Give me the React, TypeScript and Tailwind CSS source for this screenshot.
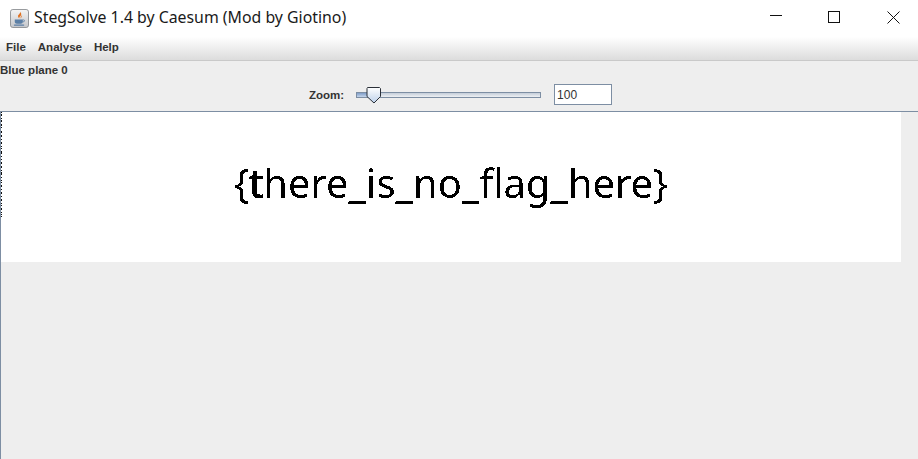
const noise = [0, 2, 3, 6, 8, 9, 12, 13, 15, 19, 20, 23, 24, 27, 30, 31, 34, 36, 39, 40, 41, 44, 47, 50, 51, 54, 55, 58, 60, 61, 62, 65, 68, 70, 73, 74, 77, 80, 81, 84, 87, 88, 91, 93, 96, 97, 100, 102, 104];

function JavaIcon() {
  return (
    <svg width="19" height="19" viewBox="0 0 20 20" className="shrink-0">
      <defs>
        <linearGradient id="jbg" x1="0" y1="0" x2="0" y2="1">
          <stop offset="0" stopColor="#f4f4f4" />
          <stop offset="1" stopColor="#c4c6ca" />
        </linearGradient>
      </defs>
      <rect x="0.5" y="0.5" width="19" height="19" rx="2.5" fill="url(#jbg)" stroke="#8f9296" />
      <path d="M10.5 3c1 2-2.5 3-2 5 .2 1 1 1.5 1.3 2-.2-1.400.3-2 1.500-3 1-.9 .6-2.500-.8-4z" fill="#e0701e" />
      <path d="M12.800 6.500c-1.300.8-1.800 1.500-1.500 3.500 .8-1 .9-2.300 1.500-3.500z" fill="#e0701e" />
      <path d="M5 11h8.500v2.500c0 1.200-1 2-2.200 2H7.200c-1.200 0-2.200-.8-2.200-2z" fill="#5b7fa6" />
      <path d="M13.500 11.500h1c1.200 0 1.200 2-.5 2h-.8" fill="none" stroke="#5b7fa6" strokeWidth="0.9" />
      <rect x="4" y="16.300" width="11" height="1.200" rx="0.6" fill="#5b7fa6" />
    </svg>
  );
}

function TitleBar() {
  return (
    <div className="flex h-[37px] items-center bg-white pb-[1px] pl-[10px]">
      <JavaIcon />
      <span className="ml-[5px] font-['Noto_Sans',sans-serif] text-[15.85px] text-[#1a1a1a]">
        StegSolve 1.4 by Caesum (Mod by Giotino)
      </span>
      <div className="ml-auto flex items-center pb-[1px]">
        <svg width="13" height="13" viewBox="0 0 13 13" className="mr-[45px]">
          <path d="M0 4.500H12" stroke="#111" strokeWidth="1" />
        </svg>
        <svg width="13" height="13" viewBox="0 0 13 13" className="mr-[46px]">
          <rect x="0.5" y="0.500" width="11" height="11" fill="none" stroke="#111" />
        </svg>
        <svg width="13" height="13" viewBox="0 0 13 13" className="mr-[18px]">
          <path d="M0.500 0.500L12.500 12.500M12.500 0.500L0.500 12.500" stroke="#111" strokeWidth="1" />
        </svg>
      </div>
    </div>
  );
}

function MenuBar() {
  return (
    <div className="flex h-[24px] items-center gap-[12px] border-b border-[#c9c9c9] bg-gradient-to-b from-white to-[#dcdcdc] pb-[2px] pl-[6px] font-['Liberation_Sans',sans-serif] text-[11.5px] font-bold text-[#333]">
      <span>File</span>
      <span>Analyse</span>
      <span>Help</span>
    </div>
  );
}

function ZoomRow() {
  return (
    <div className="flex h-[29px] items-start justify-center pt-[2px] pl-[3px] font-['Liberation_Sans',sans-serif] text-[11.5px] text-[#333]">
      <span className="mt-[3px] mr-[12px] font-bold">Zoom:</span>
      <div className="relative mt-[8px] h-[6px] w-[185px] border border-[#7d8ea3] bg-gradient-to-b from-[#c4cdd9] to-[#eef0f3]">
        <div className="h-full w-[14px] bg-gradient-to-b from-[#7f9dc8] to-[#c5d5ea]" />
        <svg width="16" height="17" viewBox="0 0 16 17" className="absolute top-[-6px] left-[9px]">
          <defs>
            <linearGradient id="thumb" x1="0" y1="0" x2="0" y2="1">
              <stop offset="0" stopColor="#ffffff" />
              <stop offset="1" stopColor="#bcd0ea" />
            </linearGradient>
          </defs>
          <path d="M1.500 .5H13.500L14.500 1.500V9.500L8 16 1 9.500V1.500z" fill="url(#thumb)" stroke="#2b3038" />
        </svg>
      </div>
      <div className="ml-[13px] flex h-[21px] w-[58px] items-center border border-[#7d8ea3] bg-white pl-[2px] text-[12px] text-[#333]">
        100
      </div>
    </div>
  );
}

function Canvas() {
  return (
    <div className="relative flex h-[150px] w-[900px] items-center justify-center bg-white pb-[9px]">
      <svg width="1" height="106" className="absolute top-0 left-0">
        {noise.map((y) => (
          <rect key={y} x="0" y={y} width="1" height="1" fill="#111" />
        ))}
      </svg>
      {/* the plane is 1-bit, so the text gets its antialiasing cut off */}
      <svg width="0" height="0" className="absolute">
        <filter id="onebit" colorInterpolationFilters="sRGB">
          <feComponentTransfer>
            <feFuncA type="discrete" tableValues="0 1" />
          </feComponentTransfer>
        </filter>
      </svg>
      <span className="font-['Noto_Sans',sans-serif] text-[39.8px] leading-none text-black [filter:url(#onebit)]">
        {"{"}
        <span className="[-webkit-text-stroke:1px_black]">t</span>
        {"here_is_no_flag_here}"}
      </span>
    </div>
  );
}

export default function App() {
  return (
    <div className="flex h-[459px] w-[918px] flex-col overflow-hidden bg-[#eeeeee]">
      <TitleBar />
      <MenuBar />
      <div className="h-[21px] pt-[2px] font-['Liberation_Sans',sans-serif] text-[11.5px] leading-[14px] font-bold text-[#333]">
        Blue plane 0
      </div>
      <ZoomRow />
      <div className="flex-1 border-t border-l border-[#7d8ea3]">
        <Canvas />
      </div>
    </div>
  );
}
